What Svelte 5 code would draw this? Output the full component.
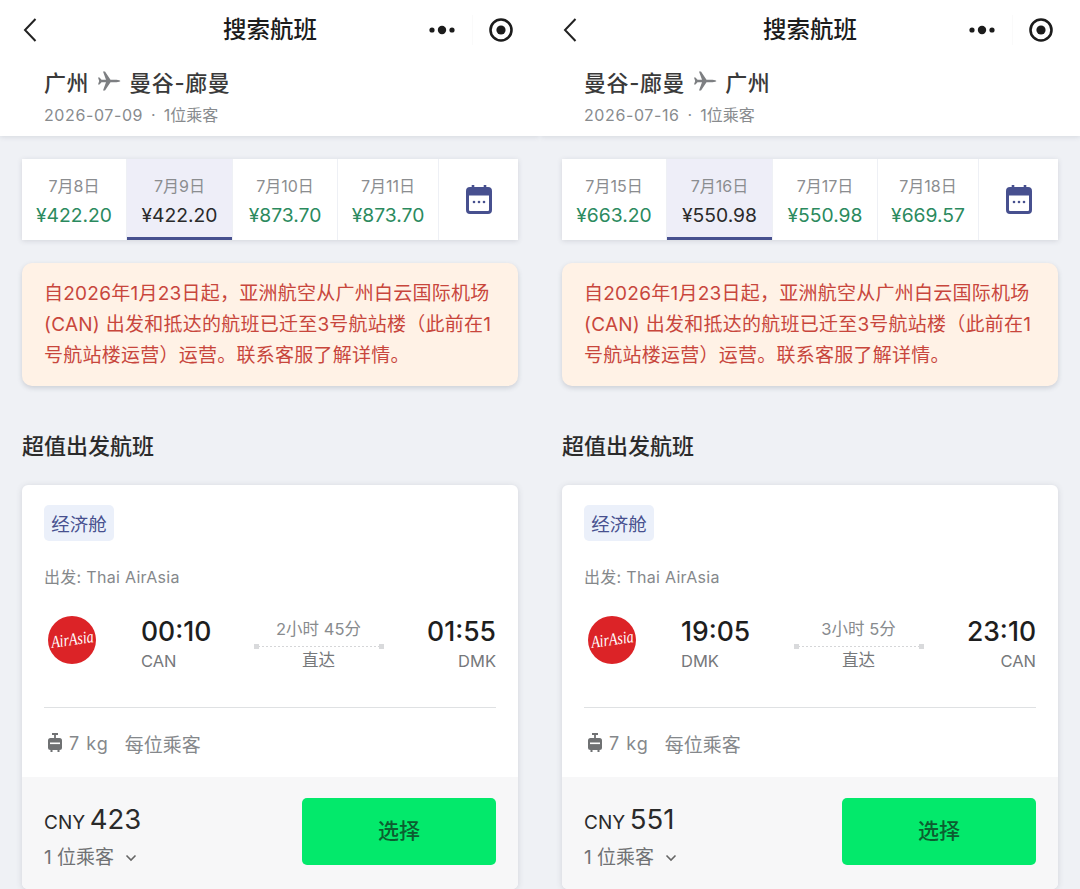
<script>
  const panes = [
    {
      from: "广州", to: "曼谷-廊曼", sub: "2026-07-09", active: 1,
      dates: [["7月8日", "¥422.20"], ["7月9日", "¥422.20"], ["7月10日", "¥873.70"], ["7月11日", "¥873.70"]],
      dep: "00:10", depCode: "CAN", arr: "01:55", arrCode: "DMK", dur: "2小时 45分", price: "423",
    },
    {
      from: "曼谷-廊曼", to: "广州", sub: "2026-07-16", active: 1,
      dates: [["7月15日", "¥663.20"], ["7月16日", "¥550.98"], ["7月17日", "¥550.98"], ["7月18日", "¥669.57"]],
      dep: "19:05", depCode: "DMK", arr: "23:10", arrCode: "CAN", dur: "3小时 5分", price: "551",
    },
  ]
</script>

<div class="page">
  {#each panes as p}
    <section class="pane">
      <header class="top">
        <div class="nav">
          <svg class="back" width="16" height="26" viewBox="0 0 16 26">
            <path d="M13.5 2 L3 13 L13.5 24" fill="none" stroke="#222" stroke-width="2" />
          </svg>
          <h1>搜索航班</h1>
          <div class="capsule">
            <svg width="28" height="12" viewBox="0 0 28 12">
              <circle cx="4" cy="6" r="2.6" fill="#1c1c1c" />
              <circle cx="14" cy="6" r="4.2" fill="#1c1c1c" />
              <circle cx="24" cy="6" r="2.6" fill="#1c1c1c" />
            </svg>
            <i class="sep"></i>
            <svg width="26" height="26" viewBox="0 0 26 26">
              <circle cx="13" cy="13" r="10.5" fill="none" stroke="#1c1c1c" stroke-width="2.6" />
              <circle cx="13" cy="13" r="4.6" fill="#1c1c1c" />
            </svg>
          </div>
        </div>
        <div class="route">
          <span>{p.from}</span>
          <svg width="24" height="22" viewBox="0 0 24 22">
            <path d="M23.5 11 C22 9.8 20 9.8 18 9.8 L13.5 9.8 L8 1.5 L6 1.5 L9 9.8 L4.5 9.8 L2.5 7.5 L1 7.5 L2.2 11 L1 14.5 L2.5 14.5 L4.5 12.2 L9 12.2 L6 20.5 L8 20.5 L13.5 12.2 L18 12.2 C20 12.2 22 12.2 23.5 11 Z" fill="#7d7f82" />
          </svg>
          <span>{p.to}</span>
        </div>
        <div class="sub"><span>{p.sub}</span><b>·</b>1位乘客</div>
      </header>

      <main>
        <div class="dates">
          {#each p.dates as d, i}
            <div class="date" class:active={i === p.active}>
              <span class="day">{d[0]}</span>
              <span class="fare">{d[1]}</span>
            </div>
          {/each}
          <div class="cal">
            <svg width="26" height="29" viewBox="0 0 26 29">
              <path d="M7 0 V5 M19 0 V5" stroke="#47508f" stroke-width="2.6" />
              <rect x="1.5" y="3.5" width="23" height="24" rx="2.5" fill="#fff" stroke="#47508f" stroke-width="3" />
              <rect x="1.5" y="3.5" width="23" height="7" fill="#47508f" />
              <circle cx="8" cy="17" r="1.3" fill="#47508f" />
              <circle cx="13" cy="17" r="1.3" fill="#47508f" />
              <circle cx="18" cy="17" r="1.3" fill="#47508f" />
            </svg>
          </div>
        </div>

        <div class="notice">自2026年1月23日起，亚洲航空从广州白云国际机场(CAN) 出发和抵达的航班已迁至3号航站楼（此前在1号航站楼运营）运营。联系客服了解详情。</div>

        <h2>超值出发航班</h2>

        <article class="card">
          <div class="body">
            <span class="tag">经济舱</span>
            <div class="carrier">出发: Thai AirAsia</div>
            <div class="flight">
              <div class="logo"><span>AirAsia</span></div>
              <div class="point">
                <strong>{p.dep}</strong>
                <span>{p.depCode}</span>
              </div>
              <div class="mid">
                <span class="dur">{p.dur}</span>
                <i class="line"></i>
                <span class="direct">直达</span>
              </div>
              <div class="point end">
                <strong>{p.arr}</strong>
                <span>{p.arrCode}</span>
              </div>
            </div>
            <div class="bag">
              <svg width="16" height="20" viewBox="0 0 16 20">
                <path d="M5 1 H11 M8 1 V5" stroke="#6f7173" stroke-width="1.8" />
                <rect x="1" y="5" width="14" height="12" rx="2.5" fill="#6f7173" />
                <rect x="3" y="9.5" width="10" height="1.6" fill="#fff" />
                <path d="M4.5 17 V19 M11.5 17 V19" stroke="#6f7173" stroke-width="2" />
              </svg>
              <span class="kg">7 kg</span>
              <span>每位乘客</span>
            </div>
          </div>
          <div class="foot">
            <div>
              <div class="price"><small>CNY</small> {p.price}</div>
              <div class="pax">
                1 位乘客
                <svg width="12" height="8" viewBox="0 0 12 8">
                  <path d="M1.5 1.5 L6 6 L10.5 1.5" fill="none" stroke="#666" stroke-width="1.6" />
                </svg>
              </div>
            </div>
            <button type="button">选择</button>
          </div>
        </article>
      </main>
    </section>
  {/each}
</div>

<style>
  :global(body) {
    margin: 0;
    background: #eff1f5;
  }

  .page {
    display: flex;
    width: 1080px;
    height: 889px;
    overflow: hidden;
    font-family: Inter, "Noto Sans CJK SC", sans-serif;
    color: #222;
  }

  .pane {
    width: 540px;
    flex: none;
    background: #eff1f5;
  }

  .top {
    height: 136px;
    background: #fff;
    box-shadow: 0 1px 5px rgba(60, 70, 90, 0.14);
    clip-path: inset(0 0 -10px 0);
    box-sizing: border-box;
    position: relative;
  }

  .nav {
    height: 60px;
    position: relative;
    display: flex;
    align-items: center;
    justify-content: center;
  }

  .back {
    position: absolute;
    left: 22px;
    top: 17px;
  }

  h1 {
    margin: -4px 0 0;
    font-size: 23.5px;
    font-weight: 500;
    color: #1c1c1c;
  }

  .capsule {
    position: absolute;
    left: 414px;
    top: 10px;
    width: 114px;
    height: 40px;
    display: flex;
    align-items: center;
    justify-content: space-between;
    box-sizing: border-box;
    padding: 0 14px;
    border-radius: 20px;
  }

  .sep {
    width: 1px;
    height: 30px;
    background: #fafafa;
  }

  .route {
    display: flex;
    align-items: center;
    gap: 8px;
    padding-left: 44px;
    height: 32px;
    margin-top: 5px;
    font-size: 22px;
    font-weight: 500;
    letter-spacing: 0.6px;
    color: #3a3a3a;
  }

  .sub {
    padding-left: 44px;
    margin-top: 6px;
    font-size: 16px;
    line-height: 24px;
    color: #888b8e;
  }

  .sub span {
    letter-spacing: 0.6px;
  }

  .sub b {
    font-weight: 400;
    margin: 0 8px;
  }

  main {
    padding: 23px 22px 0;
  }

  .dates {
    display: flex;
    height: 81px;
    background: #eef0f5;
    box-shadow: 0 1px 5px rgba(60, 70, 90, 0.16);
  }

  .date {
    flex: 0 0 104px;
    margin-right: 1px;
    box-sizing: border-box;
    background: #fff;
    display: flex;
    flex-direction: column;
    align-items: center;
    padding-top: 16px;
  }

  .date:nth-child(4) {
    flex-basis: 100px;
  }

  .date.active {
    flex-basis: 105px;
    background: #eeeef8;
    border-bottom: 3px solid #47508f;
  }

  .day {
    font-size: 16px;
    line-height: 22px;
    color: #8b8d90;
  }

  .fare {
    font-size: 19.3px;
    line-height: 30px;
    margin-top: 3px;
    color: #2b8a5e;
    white-space: nowrap;
  }

  .active .fare {
    color: #2a2a2a;
  }

  .cal {
    flex: 1;
    background: #fff;
    display: flex;
    align-items: center;
    justify-content: center;
    padding-bottom: 1px;
  }

  .notice {
    margin-top: 23px;
    height: 123px;
    box-sizing: border-box;
    padding: 15px 24px 0 22px;
    background: #fff2e6;
    border-radius: 10px;
    box-shadow: 0 2px 5px rgba(60, 70, 90, 0.2);
    font-size: 19px;
    letter-spacing: 0.25px;
    line-height: 31px;
    color: #c8463c;
  }

  h2 {
    margin: 44px 0 0;
    font-size: 22px;
    line-height: 32px;
    font-weight: 500;
    color: #2b2b2b;
  }

  .card {
    margin-top: 23px;
    background: #fff;
    border-radius: 6px;
    box-shadow: 0 1px 6px rgba(60, 70, 90, 0.16);
    overflow: hidden;
  }

  .body {
    padding: 20px 22px 0;
    height: 292px;
    box-sizing: border-box;
  }

  .tag {
    display: inline-block;
    width: 70px;
    height: 36px;
    line-height: 38px;
    text-align: center;
    background: #ebf0fa;
    border-radius: 5px;
    font-size: 18.5px;
    color: #47508f;
  }

  .carrier {
    margin-top: 24px;
    font-size: 16px;
    line-height: 24px;
    letter-spacing: 0.3px;
    color: #85888b;
  }

  .flight {
    margin-top: 14px;
    height: 104px;
    display: flex;
    align-items: flex-start;
    border-bottom: 1px solid #dfe1e3;
  }

  .logo {
    width: 48px;
    height: 48px;
    margin: 13px 0 0 4px;
    border-radius: 50%;
    background: #dc2327;
    display: flex;
    align-items: center;
    justify-content: center;
    flex: none;
  }

  .logo span {
    font-family: "Liberation Serif", serif;
    font-style: italic;
    font-size: 14px;
    color: #fff;
    transform: rotate(-8deg) scaleY(1.25);
  }

  .point {
    margin-left: 45px;
    display: flex;
    flex-direction: column;
    width: 72px;
    flex: none;
  }

  .point strong {
    font-size: 26.5px;
    line-height: 36px;
    margin-top: 10px;
    font-weight: 500;
    color: #1e1e1e;
  }

  .point span {
    font-size: 16.5px;
    line-height: 24px;
    color: #76787b;
  }

  .point.end {
    margin-left: 0;
    align-items: flex-end;
  }

  .mid {
    flex: 1;
    display: flex;
    flex-direction: column;
    align-items: center;
    padding-top: 14px;
    font-size: 16.5px;
    color: #888b8e;
  }

  .dur {
    line-height: 24px;
    white-space: nowrap;
  }

  .line {
    display: block;
    width: 130px;
    box-sizing: border-box;
    height: 5px;
    margin-top: 3px;
    position: relative;
    background: linear-gradient(#d9dadc, #d9dadc) left center / 5px 5px no-repeat,
      linear-gradient(#d9dadc, #d9dadc) right center / 5px 5px no-repeat,
      repeating-linear-gradient(90deg, #d5d6d8 0 2px, transparent 2px 4px) center / 100% 1px no-repeat;
  }

  .direct {
    line-height: 24px;
    margin-top: -1px;
    color: #76787b;
  }

  .bag {
    height: 71px;
    display: flex;
    align-items: center;
    font-size: 19px;
    color: #85888b;
    padding-left: 3px;
    box-sizing: border-box;
    padding-bottom: 1px;
  }

  .bag svg {
    margin-right: 6px;
  }

  .kg {
    font-size: 18px;
    margin-right: 16px;
    letter-spacing: 1px;
  }

  .foot {
    height: 112px;
    background: #f7f7f8;
    display: flex;
    justify-content: space-between;
    box-sizing: border-box;
    padding: 21px 22px 0;
  }

  .price {
    margin-top: 1px;
    font-size: 27.5px;
    line-height: 40px;
    word-spacing: -3px;
    color: #2a2a2a;
  }

  .price small {
    font-size: 19px;
  }

  .pax {
    font-size: 19px;
    line-height: 30px;
    color: #6f7173;
    display: flex;
    align-items: center;
    gap: 11px;
    white-space: nowrap;
  }

  button {
    width: 194px;
    height: 67px;
    border: 0;
    border-radius: 5px;
    padding: 0 0 5px;
    background: #03e96b;
    font: 500 21px Inter, "Noto Sans CJK SC", sans-serif;
    color: #0c5d30;
  }
</style>
